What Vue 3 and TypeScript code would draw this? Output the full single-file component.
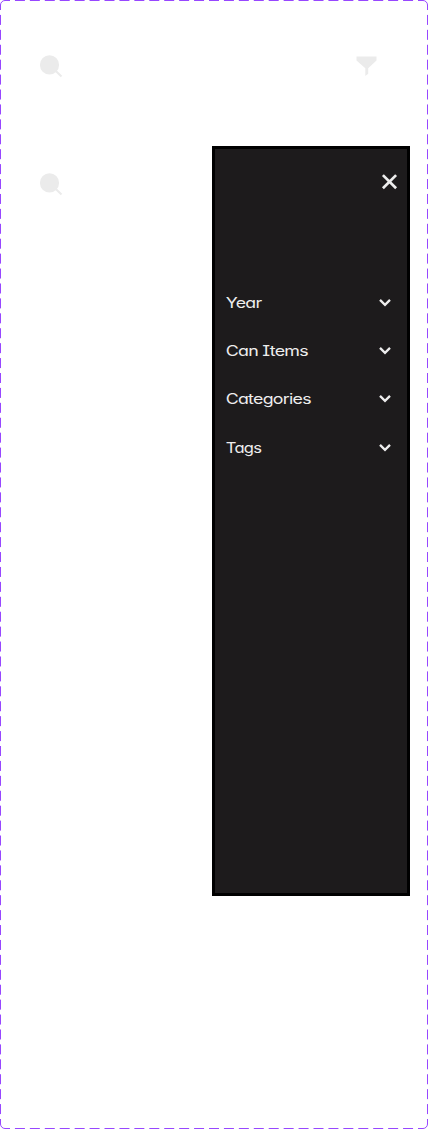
<script setup lang="ts">
interface FilterGroup {
  label: string
  width: number
}

const groups: FilterGroup[] = [
  { label: 'Year', width: 35.7 },
  { label: 'Can Items', width: 82.2 },
  { label: 'Categories', width: 85.2 },
  { label: 'Tags', width: 35.7 },
]
</script>

<template>
  <main class="frame">
    <svg class="outline" width="428" height="1129" viewBox="0 0 428 1129" aria-hidden="true">
      <path class="horizontal" d="M5 .5H423M5 1128.5H423" />
      <path class="vertical" d="M.5 5V1124M427.5 5V1124" />
      <path class="corners" d="M.5 5A4.5 4.5 0 0 1 5 .5M423 .5A4.5 4.5 0 0 1 427.5 5M427.5 1124A4.5 4.5 0 0 1 423 1128.5M5 1128.5A4.5 4.5 0 0 1 .5 1124" />
    </svg>
    <header class="toolbar">
      <svg class="search" width="24" height="24" viewBox="0 0 24 24">
        <circle cx="10.5" cy="10.9" r="9.6" />
        <path d="m16 16.3 6.5 6.2" />
      </svg>
      <svg class="funnel" width="22" height="22" viewBox="0 0 22 22">
        <path d="M.5 1.5H20.5V5.5L12.2 13.2V18.8L9.3 21V13.2L.5 5.5Z" />
      </svg>
    </header>
    <div class="body">
      <svg class="search" width="24" height="24" viewBox="0 0 24 24">
        <circle cx="10.5" cy="10.9" r="9.6" />
        <path d="m16 16.3 6.5 6.2" />
      </svg>
      <aside class="panel">
        <button class="close" aria-label="Close">
          <svg width="16" height="16" viewBox="0 0 16 16"><path d="M1.9 1.1 15.1 14.3M15.1 1.1 1.9 14.3" /></svg>
        </button>
        <nav class="groups">
          <button v-for="group in groups" :key="group.label" class="group">
            <svg class="label" width="110" height="24" viewBox="0 0 110 24">
              <text x="-.3" y="17" :textLength="group.width" lengthAdjust="spacingAndGlyphs">{{ group.label }}</text>
            </svg>
            <svg class="chevron" width="12" height="8" viewBox="0 0 12 8"><path d="M1 .9 6 5.9 11 .9" /></svg>
          </button>
        </nav>
      </aside>
    </div>
  </main>
</template>

<style>
body {
  margin: 0;
  background: #fff;
}
</style>

<style scoped>
.frame {
  position: relative;
  box-sizing: border-box;
  width: 428px;
  height: 1129px;
  padding: 54px 18px 0 39px;
  background: #fff;
  font-family: Inter, "Liberation Sans", sans-serif;
}
.outline {
  position: absolute;
  inset: 0;
  fill: none;
  stroke: #9747ff;
  stroke-width: 1;
  pointer-events: none;
}
.horizontal {
  stroke-dasharray: 10 4.9286;
  stroke-dashoffset: 5;
}
.vertical {
  stroke-dasharray: 10 4.92;
  stroke-dashoffset: 5;
}
.toolbar {
  display: flex;
  justify-content: space-between;
  height: 92px;
  padding-right: 32px;
}
.search {
  display: block;
  fill: #ebebeb;
}
.search path {
  stroke: #ebebeb;
  stroke-width: 2.1;
}
.funnel {
  display: block;
  margin-top: 1px;
  fill: #ebebeb;
}
.body {
  display: flex;
  justify-content: space-between;
}
.body .search {
  margin-top: 26px;
}
.panel {
  box-sizing: border-box;
  width: 198px;
  height: 750px;
  border: 3px solid #000;
  background: #1d1b1c;
}
button {
  display: flex;
  padding: 0;
  border: 0;
  background: none;
  color: #ededed;
  font-family: inherit;
}
.close {
  margin: 25px 10px 0 auto;
}
.close svg,
.chevron {
  display: block;
  overflow: visible;
  fill: none;
  stroke: currentColor;
  stroke-width: 2.7;
}
.chevron {
  stroke-width: 2.3;
}
.groups {
  display: grid;
  grid-auto-rows: 48.3px;
  margin-top: 88.5px;
  padding: 0 16px 0 11px;
}
.group {
  align-items: center;
  justify-content: space-between;
}
.label {
  overflow: visible;
}
.label text {
  fill: #ededed;
  font-size: 14.6px;
  font-weight: 370;
  letter-spacing: -.6px;
  font-feature-settings: "cv11" 1, "cv08" 1;
}
</style>
